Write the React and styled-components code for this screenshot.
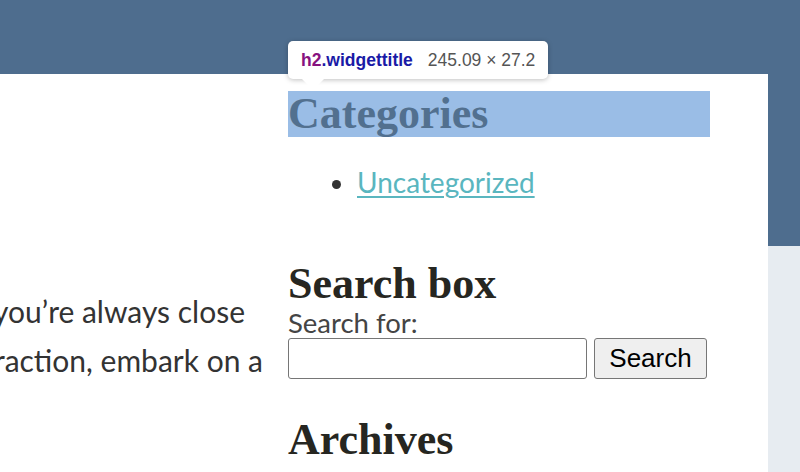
import React from "react";
import styled, { createGlobalStyle } from "styled-components";

const Global = createGlobalStyle`
  html, body { margin: 0; padding: 0; }
  body { background: #e7ecf1; overflow: hidden; }
`;

const Page = styled.div`
  width: 800px;
  height: 472px;
  background: linear-gradient(to bottom, #4e6d8e 0, #4e6d8e 246px, #e7ecf1 246px);
  overflow: hidden;
`;

const Card = styled.div`
  margin-top: 74px;
  width: 768px;
  height: 398px;
  background: #ffffff;
  display: grid;
  grid-template-columns: 265px 422px;
  column-gap: 23px;
`;

const Content = styled.div`
  overflow: hidden;
  padding-top: 213px;
  font-family: Lato, "Noto Sans", sans-serif;
  font-size: 30px;
  line-height: 49px;
  color: #333333;
`;

const Line = styled.div`
  white-space: nowrap;
  display: flex;
  justify-content: flex-end;
  padding-right: ${(p) => p.$pad}px;
`;

const Sidebar = styled.aside`
  position: relative;
  padding-top: 17px;
`;

const WidgetTitle = styled.h2`
  margin: 0;
  font-family: "Liberation Serif", "Times New Roman", serif;
  font-weight: 700;
  font-size: 44px;
  line-height: 46px;
  color: ${(p) => (p.$hl ? "#52708f" : "#262621")};
  background: ${(p) => (p.$hl ? "#9abde6" : "transparent")};
  margin-top: ${(p) => p.$mt || 0}px;
`;

const List = styled.ul`
  margin: 27px 0 0;
  padding-left: 69px;
  font-family: Lato, "Noto Sans", sans-serif;
  font-size: 28px;
  line-height: 36px;
  color: #333;
`;

const Link = styled.a`
  color: #5ab6bf;
  text-decoration: underline;
  text-underline-offset: 3px;
  text-decoration-thickness: 2px;
`;

const Label = styled.label`
  display: block;
  font-family: Lato, "Noto Sans", sans-serif;
  font-size: 27.5px;
  line-height: 31px;
  color: #444;
`;

const Form = styled.form`
  display: flex;
  gap: 7px;
  margin: 0;
`;

const Input = styled.input`
  box-sizing: border-box;
  width: 299px;
  height: 41px;
  border: 1px solid #767676;
  border-radius: 3px;
  background: #fff;
  margin: 0;
`;

const Button = styled.button`
  box-sizing: border-box;
  width: 113px;
  height: 41px;
  border: 1px solid #767676;
  border-radius: 3px;
  background: #efefef;
  font-family: "Liberation Sans", Arial, sans-serif;
  font-size: 26px;
  color: #000;
  padding: 0;
  margin: 0;
`;

const Tooltip = styled.div`
  position: absolute;
  left: 0;
  top: -33px;
  height: 38px;
  box-sizing: border-box;
  padding: 0 13px 0 13px;
  display: flex;
  align-items: center;
  gap: 15px;
  background: #fff;
  border-radius: 5px;
  box-shadow: 0 1px 5px rgba(0, 0, 0, 0.25);
  font-family: "Liberation Sans", Arial, sans-serif;
  font-size: 17.5px;
  white-space: nowrap;
  &::after {
    content: "";
    position: absolute;
    left: 14px;
    bottom: -11px;
    border-left: 11px solid transparent;
    border-right: 11px solid transparent;
    border-top: 11px solid #fff;
  }
`;

const Tag = styled.span`
  font-weight: 700;
  color: #881280;
`;

const Cls = styled.span`
  font-weight: 700;
  color: #1a1aa6;
`;

const Size = styled.span`
  color: #555;
`;

export default function App() {
  return (
    <>
      <Global />
      <Page>
        <Card>
          <Content>
            <Line $pad={20}>you’re always close</Line>
            <Line $pad={2}>raction, embark on a</Line>
          </Content>
          <Sidebar>
            <Tooltip>
              <span>
                <Tag>h2</Tag>
                <Cls>.widgettitle</Cls>
              </span>
              <Size>245.09 × 27.2</Size>
            </Tooltip>
            <WidgetTitle $hl>Categories</WidgetTitle>
            <List>
              <li>
                <Link href="#">Uncategorized</Link>
              </li>
            </List>
            <WidgetTitle $mt={61}>Search box</WidgetTitle>
            <Label htmlFor="s">Search for:</Label>
            <Form onSubmit={(e) => e.preventDefault()}>
              <Input id="s" type="text" />
              <Button type="submit">Search</Button>
            </Form>
            <WidgetTitle $mt={38}>Archives</WidgetTitle>
          </Sidebar>
        </Card>
      </Page>
    </>
  );
}
